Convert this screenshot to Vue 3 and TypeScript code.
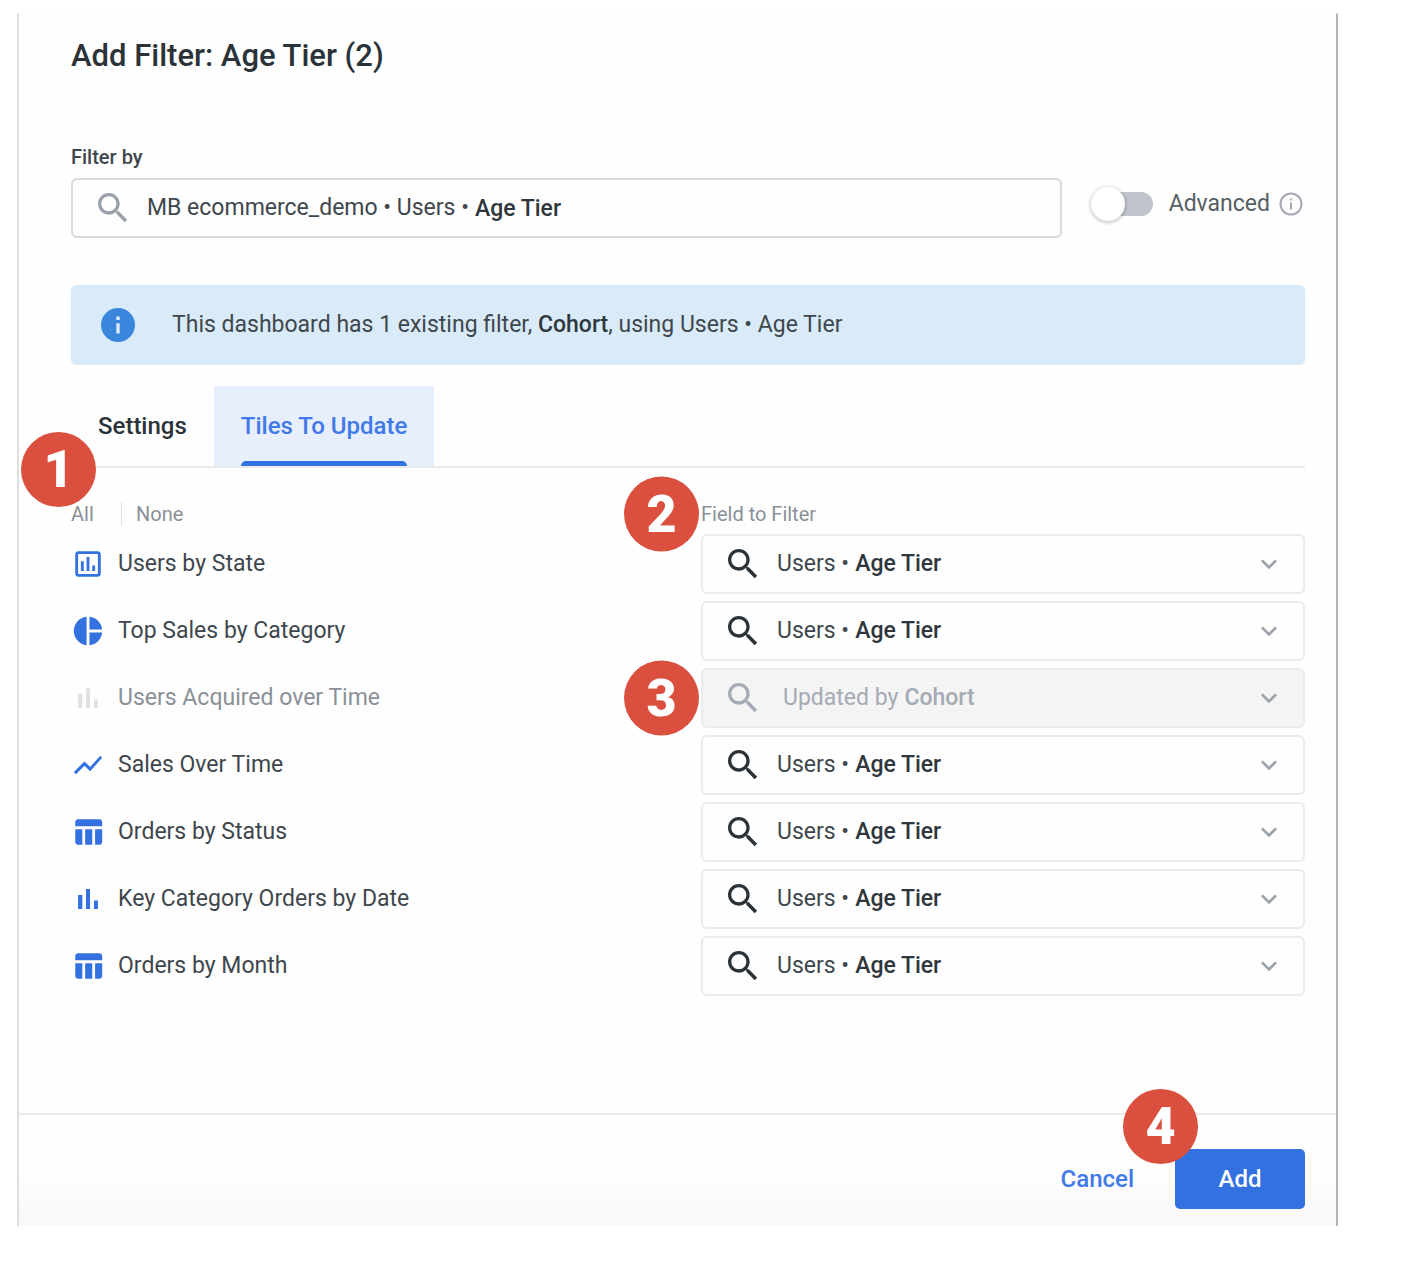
<script setup lang="ts">
import { ref } from 'vue'

type IconName = 'chart' | 'pie' | 'bars' | 'line' | 'table'

interface Tile {
  id: string
  name: string
  icon: IconName
  prefix: string
  field: string
  disabled?: boolean
  callout?: number
}

const icons: Record<IconName, string> = {
  chart:
    'M19 3H5c-1.1 0-2 .9-2 2v14c0 1.1.9 2 2 2h14c1.1 0 2-.9 2-2V5c0-1.1-.9-2-2-2zm0 16H5V5h14v14zM7 10h2v7H7zM11 7h2v10h-2zM15 13h2v4h-2z',
  pie: 'M11 2v20c-5.070-.5-9-4.790-9-10s3.930-9.500 9-10zm2.030 0v8.990H22c-.470-4.740-4.240-8.520-8.970-8.990zm0 11.010V22c4.740-.470 8.500-4.250 8.970-8.990h-8.970z',
  bars: 'M5 9.200h3V19H5zM10.600 5h2.800v14h-2.800zM16.200 13H19v6h-2.800z',
  line: 'M3.500 18.490l6-6.010 4 4L22 6.920l-1.410-1.410-7.090 7.970-4-4L2 16.990z',
  table:
    'M10 10.020h5V21h-5zM17 21h3c1.100 0 2-.9 2-2v-9h-5v11zm3-18H5c-1.100 0-2 .9-2 2v3h19V5c0-1.100-.9-2-2-2zM3 19c0 1.100.9 2 2 2h3V10H3v9z',
}

const searchPath =
  'M15.500 14h-.790l-.280-.270C15.410 12.590 16 11.110 16 9.500 16 5.910 13.090 3 9.500 3S3 5.910 3 9.500 5.910 16 9.500 16c1.610 0 3.090-.590 4.230-1.570l.270.280v.790l5 4.990L20.490 19l-4.990-5zm-6 0C7.010 14 5 11.990 5 9.500S7.010 5 9.500 5 14 7.010 14 9.500 11.990 14 9.500 14z'

const tiles = ref<Tile[]>([
  { id: 'users-state', name: 'Users by State', icon: 'chart', prefix: 'Users •', field: 'Age Tier' },
  { id: 'top-sales', name: 'Top Sales by Category', icon: 'pie', prefix: 'Users •', field: 'Age Tier' },
  { id: 'users-acquired', name: 'Users Acquired over Time', icon: 'bars', prefix: 'Updated by', field: 'Cohort', disabled: true, callout: 3 },
  { id: 'sales-time', name: 'Sales Over Time', icon: 'line', prefix: 'Users •', field: 'Age Tier' },
  { id: 'orders-status', name: 'Orders by Status', icon: 'table', prefix: 'Users •', field: 'Age Tier' },
  { id: 'key-category', name: 'Key Category Orders by Date', icon: 'bars', prefix: 'Users •', field: 'Age Tier' },
  { id: 'orders-month', name: 'Orders by Month', icon: 'table', prefix: 'Users •', field: 'Age Tier' },
])

const filterField = ref('Age Tier')
const advanced = ref(false)
</script>

<template>
  <main class="dialog" role="dialog" aria-labelledby="dialog-title">
    <div class="body">
      <h1 id="dialog-title" class="title">Add Filter: Age Tier (2)</h1>

      <label class="field-label" for="filter-by">Filter by</label>
      <div class="filter-row">
        <div class="box search-box">
          <svg class="search-icon" viewBox="0 0 24 24" aria-hidden="true"><path :d="searchPath" /></svg>
          <span class="prefix">MB ecommerce_demo • Users •</span>
          <input id="filter-by" v-model="filterField" class="value" type="text" />
        </div>
        <div class="advanced">
          <input id="advanced" v-model="advanced" class="switch" type="checkbox" role="switch" />
          <label for="advanced">Advanced</label>
          <svg class="hint" viewBox="0 0 24 24" aria-hidden="true">
            <circle cx="12" cy="12" r="10.500" fill="none" stroke="currentColor" stroke-width="2" />
            <path d="M11 10.500h2v7h-2zM11 6.500h2v2h-2z" fill="currentColor" />
          </svg>
        </div>
      </div>

      <div class="banner" role="status">
        <svg class="info" viewBox="0 0 34 34" aria-hidden="true">
          <circle cx="17" cy="17" r="17" fill="#3a86dc" />
          <path d="M15.300 15.300h3.400v10.200h-3.400zM15.300 8.500h3.400v3.400h-3.400z" fill="#d9ebf8" />
        </svg>
        <p>This dashboard has 1 existing filter, <strong>Cohort</strong>, using Users • Age Tier</p>
      </div>

      <div class="tabs" role="tablist">
        <button class="tab" type="button" role="tab" aria-selected="false">Settings</button>
        <button class="tab active" type="button" role="tab" aria-selected="true">Tiles To Update</button>
        <span class="callout callout-tabs">1</span>
      </div>

      <div class="columns head">
        <div class="pick">
          <button type="button" class="pick-button">All</button>
          <button type="button" class="pick-button none">None</button>
        </div>
        <div class="cell">
          Field to Filter
          <span class="callout callout-side">2</span>
        </div>
      </div>

      <ul class="tiles">
        <li v-for="tile in tiles" :key="tile.id" class="columns" :class="{ disabled: tile.disabled }">
          <label class="tile-name" :for="tile.id">
            <svg class="tile-icon" viewBox="0 0 24 24" aria-hidden="true"><path :d="icons[tile.icon]" /></svg>
            {{ tile.name }}
          </label>
          <div class="cell">
            <div class="box select-box">
              <svg class="search-icon" viewBox="0 0 24 24" aria-hidden="true"><path :d="searchPath" /></svg>
              <span class="prefix">{{ tile.prefix }}</span>
              <select :id="tile.id" v-model="tile.field" class="value" :disabled="tile.disabled">
                <option>{{ tile.field }}</option>
              </select>
              <svg class="chevron" viewBox="0 0 24 24" aria-hidden="true">
                <path d="M16.590 8.590L12 13.170 7.410 8.590 6 10l6 6 6-6z" />
              </svg>
            </div>
            <span v-if="tile.callout" class="callout callout-side">{{ tile.callout }}</span>
          </div>
        </li>
      </ul>
    </div>

    <footer class="footer">
      <button class="cancel" type="button">Cancel</button>
      <div class="add-wrap">
        <button class="add" type="button">Add</button>
        <span class="callout callout-add">4</span>
      </div>
    </footer>
  </main>
</template>

<style>
body {
  margin: 0;
  background: #fff;
}
</style>

<style scoped>
.dialog {
  box-sizing: border-box;
  margin: 13px 67px 37px 17px;
  border: solid;
  border-width: 1px 2px 0;
  border-color: #fafafa #b4b5b6 #fff #dedfe0;
  background: #fefefe;
  color: #3f474d;
  font-family: Roboto, 'Liberation Sans', sans-serif;
  font-size: 23px;
  line-height: 32px;
}

button,
input,
select {
  margin: 0;
  padding: 0;
  border: 0;
  background: none;
  color: inherit;
  font: inherit;
}

.body {
  padding: 24px 31px 117px 52px;
}

.title {
  margin: 0 0 71px;
  color: #2b3339;
  font-size: 31px;
  font-weight: 500;
  line-height: 36px;
}

.field-label {
  display: block;
  margin-bottom: 9px;
  font-size: 20px;
  font-weight: 500;
  line-height: 24px;
}

.filter-row {
  display: flex;
  gap: 29px;
}

.box {
  box-sizing: border-box;
  display: flex;
  align-items: center;
  height: 60px;
  padding-left: 20px;
  border: 2px solid #e9ebed;
  border-radius: 6px;
}

.search-box {
  flex: 1;
  border-color: #d6d9de;
}

.search-icon {
  flex: none;
  width: 40px;
  height: 40px;
  margin-right: 14px;
  fill: #2b3339;
}

.search-box .search-icon {
  fill: #9aa1aa;
}

.prefix {
  margin-right: 6px;
  white-space: nowrap;
}

.value {
  flex: 1;
  min-width: 0;
  height: 56px;
  font-weight: 500;
  color: #2f373d;
  outline: 0;
  appearance: none;
}

.advanced {
  display: flex;
  align-items: center;
  height: 52px;
  color: #565e64;
}

.switch {
  position: relative;
  width: 62px;
  height: 34px;
  margin-right: 16px;
  appearance: none;
}

.switch::before {
  content: '';
  position: absolute;
  inset: 5px 0 5px 6px;
  border-radius: 12px;
  background: #c1c4cd;
}

.switch::after {
  content: '';
  position: absolute;
  top: 0;
  left: 0;
  width: 34px;
  height: 34px;
  border-radius: 50%;
  background: #fff;
  box-shadow: 0 1px 4px rgba(0, 0, 0, 0.3);
}

.switch:checked::after {
  left: 28px;
}

.hint {
  width: 24px;
  height: 24px;
  margin: 0 2px 0 9px;
  color: #a3a8b2;
}

.banner {
  display: flex;
  align-items: center;
  gap: 37px;
  min-height: 80px;
  margin-top: 47px;
  padding: 0 30px;
  box-sizing: border-box;
  border-radius: 5px;
  background: #d9ebf8;
}

.banner p {
  margin: 0;
}

.banner strong {
  font-weight: 500;
  color: #2f373d;
}

.info {
  flex: none;
  width: 34px;
  height: 34px;
}

.tabs {
  position: relative;
  display: flex;
  margin-top: 21px;
  border-bottom: 2px solid #e8eaec;
}

.tab {
  position: relative;
  height: 80px;
  padding: 0 27px;
  color: #2b3339;
  font-size: 24px;
  font-weight: 500;
}

.active {
  background: #e7eefc;
  color: #4079e8;
}

.active::after {
  content: '';
  position: absolute;
  right: 27px;
  bottom: 0;
  left: 27px;
  height: 5px;
  border-radius: 5px 5px 0 0;
  background: #3471e0;
}

.columns {
  display: grid;
  grid-template-columns: 630fr 604fr;
  align-items: center;
}

.head {
  margin: 34px 0 8px;
  color: #8a9097;
  font-size: 20px;
  line-height: 24px;
}

.pick {
  display: flex;
}

.pick-button {
  width: 50px;
  text-align: left;
}

.none {
  width: auto;
  padding-left: 14px;
  border-left: 1px solid #dfe1e4;
}

.cell {
  position: relative;
}

.tiles {
  display: grid;
  gap: 7px;
  margin: 0;
  padding: 0;
  list-style: none;
}

.tile-name {
  display: flex;
  align-items: center;
  gap: 13px;
}

.tile-icon {
  width: 34px;
  height: 34px;
  fill: #3471e0;
}

.chevron {
  flex: none;
  width: 32px;
  height: 32px;
  margin-right: 18px;
  fill: #9aa1aa;
}

.disabled {
  color: #8a9097;
}

.disabled .tile-icon {
  fill: #dfe1e5;
}

.disabled .box {
  background: #f4f4f5;
  color: #a5abb4;
}

.disabled .search-icon {
  margin-right: 20px;
  fill: #a5abb4;
}

.disabled .value {
  color: #a5abb4;
  opacity: 1;
}

.footer {
  display: flex;
  justify-content: flex-end;
  align-items: center;
  gap: 41px;
  padding: 34px 31px 17px;
  border-top: 2px solid #eaecec;
  background: linear-gradient(#fefefe 50%, #f8f8f8);
  font-size: 24px;
  font-weight: 500;
}

.cancel {
  color: #4079e8;
}

.add-wrap {
  position: relative;
}

.add {
  width: 130px;
  height: 60px;
  border-radius: 5px;
  background: #3471e0;
  color: #fff;
}

.callout {
  position: absolute;
  width: 75px;
  height: 75px;
  border-radius: 50%;
  background: #da4f3d;
  color: #fff;
  font-family: Roboto, sans-serif;
  font-size: 52px;
  font-weight: 900;
  line-height: 75px;
  text-align: center;
}

.callout-tabs {
  top: 46px;
  left: -50px;
}

.callout-side {
  top: 50%;
  left: -77px;
  transform: translateY(-50%);
}

.callout-add {
  top: -60px;
  left: -52px;
}
</style>
